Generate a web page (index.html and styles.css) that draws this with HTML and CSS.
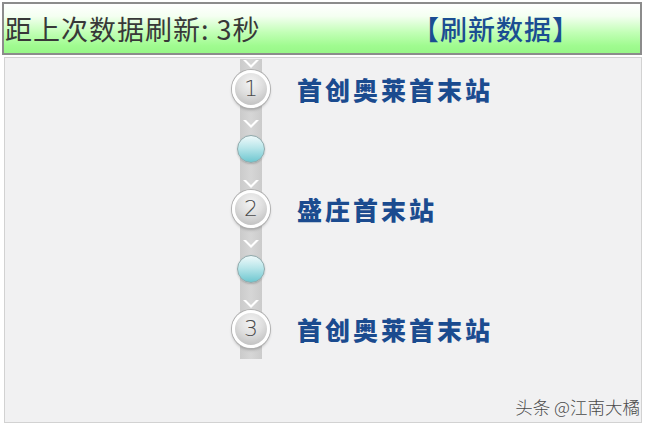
FILE: index.html
```html
<!DOCTYPE html>
<html lang="zh">
<head>
<meta charset="utf-8">
<title>线路站点</title>
<link rel="stylesheet" href="styles.css">
</head>
<body>
<div class="page">
  <div class="header">
    <span class="elapsed">距上次数据刷新: 3秒</span>
    <a class="refresh">【刷新数据】</a>
  </div>
  <div class="panel">
    <div class="timeline">
      <div class="row">
        <div class="marker"><span class="step">1</span></div>
        <div class="label">首创奥莱首末站</div>
      </div>
      <div class="row">
        <div class="marker"><span class="dot"></span></div>
        <div class="label"></div>
      </div>
      <div class="row">
        <div class="marker"><span class="step">2</span></div>
        <div class="label">盛庄首末站</div>
      </div>
      <div class="row">
        <div class="marker"><span class="dot"></span></div>
        <div class="label"></div>
      </div>
      <div class="row">
        <div class="marker"><span class="step">3</span></div>
        <div class="label">首创奥莱首末站</div>
      </div>
    </div>
    <div class="watermark">头条 @江南大橘</div>
  </div>
</div>
</body>
</html>
```
FILE: styles.css
```css
html, body {
  margin: 0;
  padding: 0;
  background: #ffffff;
}
.page {
  width: 648px;
  height: 430px;
  padding: 2px 6px 0 2px;
  box-sizing: border-box;
  font-family: "Noto Sans CJK SC", "Liberation Sans", sans-serif;
}
.header {
  height: 53px;
  box-sizing: border-box;
  border: 2px solid #8c8c8c;
  background: linear-gradient(to bottom, #ffffff 0%, #f4fff1 25%, #c2ffb6 58%, #a0fb90 85%, #98f788 100%);
  display: flex;
  align-items: center;
  justify-content: space-between;
  padding: 0 60px 0 1px;
}
.elapsed {
  font-size: 27px;
  color: #383838;
  letter-spacing: 1px;
  line-height: 1;
}
.refresh {
  font-size: 27px;
  font-weight: 500;
  color: #1b4d92;
  line-height: 1;
  letter-spacing: 1px;
}
.panel {
  margin: 2px 0 0 2px;
  height: 366px;
  box-sizing: border-box;
  border: 1px solid #d2d2d2;
  background: #f1f1f2;
  display: flex;
  flex-direction: column;
  padding: 1px 1px 7px 226px;
}
.timeline {
  display: flex;
  flex-direction: column;
}
.row {
  display: flex;
  align-items: center;
  height: 60px;
  gap: 26px;
}
.marker {
  position: relative;
  width: 40px;
  height: 60px;
  display: flex;
  align-items: center;
  justify-content: center;
  background: linear-gradient(to right, transparent 9px, #cbcbcb 9px, #d6d6d6 20px, #cbcbcb 31px, transparent 31px);
}
.marker::before {
  content: "";
  position: absolute;
  left: 12px;
  top: 1px;
  width: 16px;
  height: 8px;
  background: #ffffff;
  clip-path: polygon(0 0, 3px 0, 8px 5px, 13px 0, 16px 0, 8px 8px);
}
.step {
  position: relative;
  width: 32px;
  height: 32px;
  border-radius: 50%;
  border: 3px solid #ffffff;
  background: radial-gradient(circle at 50% 30%, #f4f4f4 0%, #dedede 45%, #b5b5b5 100%);
  box-shadow: 0 0 0 1px #b0b0b0, 0 2px 3px rgba(0, 0, 0, 0.25);
  display: flex;
  align-items: center;
  justify-content: center;
  font-family: "DejaVu Sans", "Liberation Sans", sans-serif;
  font-size: 22px;
  font-weight: 300;
  color: #4a4a4a;
  line-height: 1;
}
.dot {
  position: relative;
  width: 28px;
  height: 28px;
  border-radius: 50%;
  box-sizing: border-box;
  border: 1px solid #8fa9ab;
  background: linear-gradient(to bottom, #eef9fa 0%, #b9e6ea 45%, #6fc7d0 100%);
  box-shadow: 0 1px 2px rgba(0, 0, 0, 0.2);
}
.label {
  font-size: 25px;
  font-weight: 900;
  color: #1b4b8f;
  letter-spacing: 3px;
  line-height: 1;
}
.watermark {
  margin-top: auto;
  align-self: flex-end;
  font-size: 17.5px;
  font-weight: 300;
  color: #4a4a4a;
  line-height: 1;
}
```
